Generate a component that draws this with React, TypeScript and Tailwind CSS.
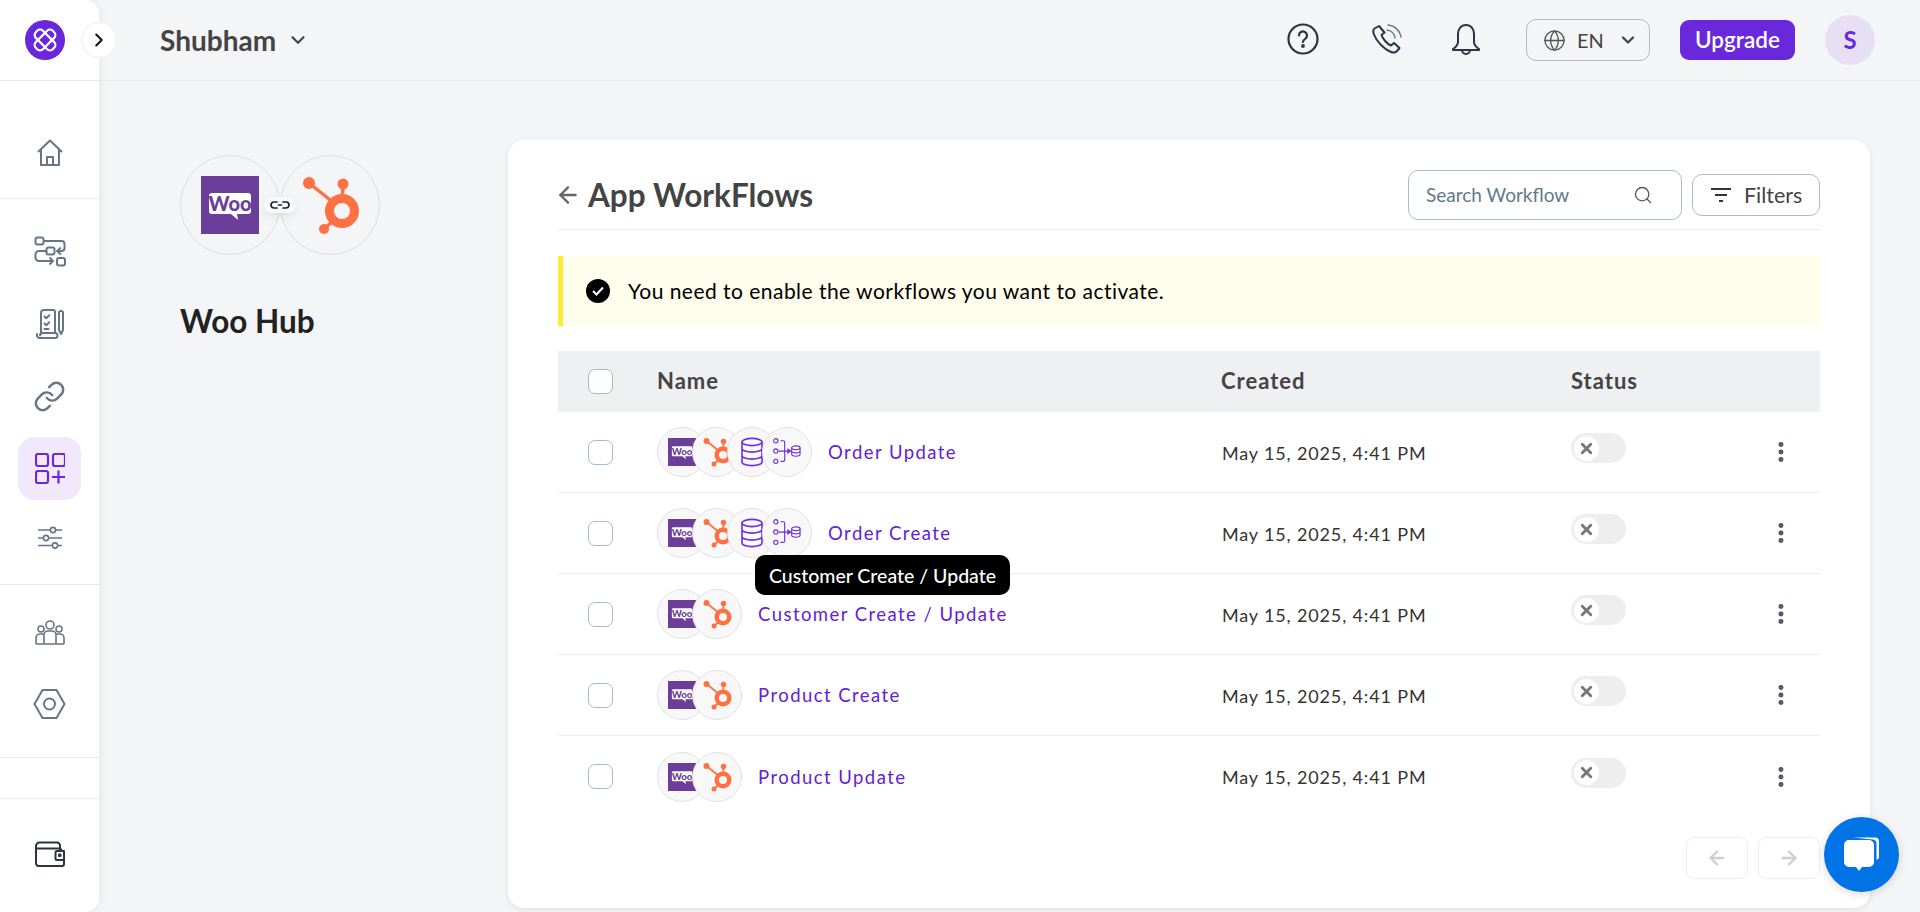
import { ArrowLeft, ArrowRight, ChevronDown, ChevronRight, EllipsisVertical, Globe, Link, Search, X } from 'lucide-react'

function WooLogo ({ size }: { size: number }): JSX.Element {
  return (
    <svg width={size} height={size} viewBox="0 0 58 58" className="shrink-0">
      <rect width="58" height="58" fill="#6b3f99" />
      <path d="M11 17h36a3 3 0 0 1 3 3v15a3 3 0 0 1-3 3H36l1 6-7-6H11a3 3 0 0 1-3-3V20a3 3 0 0 1 3-3z" fill="#fff" />
      <text x="29" y="34.500" textAnchor="middle" fontFamily="Lato, sans-serif" fontWeight="900" fontSize="20" fill="#6b3f99">Woo</text>
    </svg>
  )
}

function HubLogo ({ size }: { size: number }): JSX.Element {
  return (
    <svg width={size} height={size} viewBox="0 0 64 64" className="shrink-0" fill="#ff7043" stroke="#ff7043">
      <circle cx="44" cy="38" r="12.500" fill="none" strokeWidth="9" />
      <circle cx="11" cy="10" r="6" stroke="none" />
      <circle cx="45" cy="11" r="5.500" stroke="none" />
      <circle cx="26" cy="56" r="5" stroke="none" />
      <path d="M11 10l25 20M45 11l-.5 12M26 56l10-9" fill="none" strokeWidth="3.500" />
    </svg>
  )
}

function DbIcon (): JSX.Element {
  return (
    <svg width="22" height="30" viewBox="0 0 22 30" fill="none" stroke="#6d2ee0" strokeWidth="1.600" className="shrink-0">
      <ellipse cx="11" cy="5" rx="10" ry="3.600" />
      <path d="M1 5v20c0 2 4.500 3.600 10 3.600S21 27 21 25V5M1 11.500c0 2 4.500 3.600 10 3.600s10-1.600 10-3.600M1 18.500c0 2 4.500 3.600 10 3.600s10-1.600 10-3.600" />
    </svg>
  )
}

function FlowDbIcon (): JSX.Element {
  return (
    <svg width="28" height="28" viewBox="0 0 30 30" fill="none" stroke="#6d2ee0" strokeWidth="1.200" className="shrink-0">
      <circle cx="3" cy="3" r="2.300" />
      <circle cx="3" cy="14" r="2.300" />
      <circle cx="3" cy="25" r="2.300" />
      <path d="M8 3h3a1.500 1.500 0 0 1 1.500 1.500v19A1.500 1.500 0 0 1 11 25H8M6 14h12" />
      <path d="M16 12l3 2-3 2z" fill="#6d2ee0" />
      <ellipse cx="24.500" cy="10.500" rx="4.500" ry="2" />
      <path d="M20 10.500v7c0 1.100 2 2 4.500 2s4.500-.9 4.500-2v-7M20 14c0 1.100 2 2 4.500 2s4.500-.9 4.500-2" />
    </svg>
  )
}

function Circle ({ children }: { children: React.ReactNode }): JSX.Element {
  return (
    <div className="w-[50px] h-[50px] flex items-center justify-center rounded-full border border-[#e2e2e2] overflow-hidden bg-[#f8f8f8] shrink-0 first:ml-0 ml-[-15px]">
      {children}
    </div>
  )
}

function LogoMark (): JSX.Element {
  return (
    <div className="w-10 h-10 rounded-full bg-[#6a28dc] flex items-center justify-center">
      <svg width="26" height="26" viewBox="0 0 26 26" fill="none" stroke="#fff" strokeWidth="2.200">
        <rect x="1" y="8" width="24" height="10" rx="4" transform="rotate(45 13 13)" />
        <rect x="1" y="8" width="24" height="10" rx="4" transform="rotate(-45 13 13)" />
      </svg>
    </div>
  )
}

const navStroke = '#667685'

function HomeIcon (): JSX.Element {
  return (
    <svg width="28" height="28" viewBox="0 0 28 28" fill="none" stroke={navStroke} strokeWidth="2" strokeLinejoin="round">
      <path d="M2 13L14 1.500 26 13M5 11v15h18V11" />
      <path d="M11 26v-8h6v8" />
    </svg>
  )
}

function FlowIcon (): JSX.Element {
  return (
    <svg width="32" height="32" viewBox="0 0 32 32" fill="none" stroke={navStroke} strokeWidth="2" strokeLinejoin="round">
      <rect x="1.500" y="1.500" width="8" height="7" rx="2" />
      <path d="M9.500 5h18a3 3 0 0 1 3 3v4a3 3 0 0 1-3 3H24" />
      <path d="M27 11.500L23 15l4 3.500" />
      <rect x="12.500" y="11.500" width="8" height="7" rx="2" />
      <path d="M12.500 15H5a3.500 3.500 0 0 0-3.500 3.500v3A3.500 3.500 0 0 0 5 25h13" />
      <path d="M15.500 21.500L19 25l-3.500 3.500" />
      <rect x="23" y="22" width="8" height="7.500" rx="2" />
    </svg>
  )
}

function ChecklistIcon (): JSX.Element {
  return (
    <svg width="28" height="30" viewBox="0 0 28 30" fill="none" stroke={navStroke} strokeWidth="2" strokeLinejoin="round" strokeLinecap="round">
      <path d="M5 25V4a3 3 0 0 1 3-3h9a2 2 0 0 1 2 2v20" />
      <path d="M1 25v1.500A2.500 2.500 0 0 0 3.500 29H19a2.500 2.500 0 0 0 0-5H6.500a2.500 2.500 0 0 0-2.500 2.500" />
      <path d="M8.500 7.500l1.800 1.800 3-3M8.500 14.500l1.800 1.800 3-3M8.500 20h4" />
      <path d="M23 3a2.500 2.500 0 0 1 4 0v18l-2 4-2-4z" />
    </svg>
  )
}

function AppsIcon (): JSX.Element {
  return (
    <svg width="30" height="31" viewBox="0 0 30 31" fill="none" stroke="#6a28dc" strokeWidth="2.200">
      <rect x="1" y="1" width="12" height="12" rx="2" />
      <rect x="18" y="1" width="12" height="12" rx="2" />
      <rect x="1" y="18" width="12" height="12" rx="2" />
      <path d="M17 24h13M23.500 17.500v13" />
    </svg>
  )
}

function SlidersIcon (): JSX.Element {
  return (
    <svg width="24" height="24" viewBox="0 0 24 24" fill="none" stroke={navStroke} strokeWidth="1.600">
      <path d="M0 4h12.500M18 4h6M0 12h5.500M11 12h13M0 19.500h14.500M20 19.500h4" />
      <circle cx="15" cy="4" r="2.600" />
      <circle cx="8" cy="12" r="2.600" />
      <circle cx="17" cy="19.500" r="2.600" />
    </svg>
  )
}

function TeamIcon (): JSX.Element {
  return (
    <svg width="30" height="25" viewBox="0 0 30 25" fill="none" stroke={navStroke} strokeWidth="1.600" strokeLinejoin="round">
      <circle cx="15" cy="5" r="4" />
      <circle cx="6" cy="9" r="3" />
      <circle cx="24" cy="9" r="3" />
      <path d="M9 24v-9a4 4 0 0 1 4-4h4a4 4 0 0 1 4 4v9M1 24v-6a4 4 0 0 1 4-4h4M29 24v-6a4 4 0 0 0-4-4h-4M1 24h28" />
    </svg>
  )
}

function HexIcon (): JSX.Element {
  return (
    <svg width="33" height="30" viewBox="0 0 33 30" fill="none" stroke={navStroke} strokeWidth="2" strokeLinejoin="round">
      <path d="M9.500 1h14l8 14-8 14h-14l-8-14z" />
      <circle cx="16.500" cy="15" r="5.500" />
    </svg>
  )
}

function WalletIcon (): JSX.Element {
  return (
    <svg width="30" height="26" viewBox="0 0 30 26" fill="none" stroke="#2b3542" strokeWidth="2" strokeLinejoin="round">
      <path d="M1 5a3.500 3.500 0 0 1 3.500-3.500H22A3 3 0 0 1 25 5v3.500h2M1 5v17a3 3 0 0 0 3 3h23a2 2 0 0 0 2-2v-4M1 7.500h24" />
      <path d="M29 10v9h-7a1.500 1.500 0 0 1-1.500-1.500v-6A1.500 1.500 0 0 1 22 10z" />
      <rect x="24" y="13.500" width="1.500" height="1.500" fill="#2b3542" />
    </svg>
  )
}

function HelpIcon (): JSX.Element {
  return (
    <svg width="32" height="32" viewBox="0 0 32 32" fill="none" stroke="#2b3542" strokeWidth="2.200" strokeLinecap="round">
      <circle cx="16" cy="16" r="14.500" />
      <path d="M12 12.500a4 4 0 1 1 6.200 3.300c-1.400.9-2.200 1.600-2.200 3.200" />
      <circle cx="16" cy="23" r=".8" fill="#2b3542" />
    </svg>
  )
}

function PhoneIcon (): JSX.Element {
  return (
    <svg width="30" height="30" viewBox="0 0 30 30" fill="none" stroke="#2b3542" strokeWidth="2" strokeLinejoin="round" strokeLinecap="round">
      <path d="M7 2L2.500 4.500C1 5.500 1 8 2 10.500 4 16 11 25 19 28c2.500 1 4.500.5 6-1l2.500-3-5.500-5-3 2.500C15 20 10.500 14.500 9.500 11l3-2.500z" />
      <path d="M15 6c4 .5 7.500 3.500 8 8M16 1c6.500.5 12 5.500 13 12" strokeWidth="1.400" stroke="#667685" />
    </svg>
  )
}

function BellIcon (): JSX.Element {
  return (
    <svg width="30" height="31" viewBox="0 0 30 31" fill="none" stroke="#2b3542" strokeWidth="2" strokeLinejoin="round">
      <path d="M15 1C10 1 7 5 7 10v8c0 3-2 5-5 7v1h26v-1c-3-2-5-4-5-7v-8c0-5-3-9-8-9z" />
      <path d="M11 26a4 4 0 0 0 8 0" />
    </svg>
  )
}

function ChatIcon (): JSX.Element {
  return (
    <svg width="40" height="36" viewBox="0 0 40 36" fill="#fff">
      <path d="M7 3h20a5 5 0 0 1 5 5v17a5 5 0 0 1-5 5h-7l-3 4-3-4H7a5 5 0 0 1-5-5V8a5 5 0 0 1 5-5z" />
      <path d="M11 .5h22a4 4 0 0 1 4 4V21l-2.500 2V7a4 4 0 0 0-4-4.500z" />
    </svg>
  )
}

const rows = [
  { name: 'Order Update', full: true },
  { name: 'Order Create', full: true },
  { name: 'Customer Create / Update', full: false, tip: true },
  { name: 'Product Create', full: false },
  { name: 'Product Update', full: false }
]

function Checkbox (): JSX.Element {
  return <div className="w-[25px] h-[25px] rounded-[7px] border border-[#a9bac6] bg-white" />
}

function Row ({ name, full, tip, last }: { name: string, full: boolean, tip?: boolean, last: boolean }): JSX.Element {
  return (
    <div className={`flex items-center h-[81px] ${last ? '' : 'border-b border-[#eeeeee]'}`}>
      <div className="w-[99px] pl-[30px] shrink-0"><Checkbox /></div>
      <div className="w-[564px] shrink-0 flex items-center">
        <Circle><WooLogo size={28} /></Circle>
        <Circle><HubLogo size={32} /></Circle>
        {full && <Circle><DbIcon /></Circle>}
        {full && <Circle><FlowDbIcon /></Circle>}
        <span className="relative ml-[16px] mt-[2px] text-[18.5px] tracking-[1.450px] text-[#6321d6]">
          {name}
          {tip && (
            <span className="absolute left-[-3px] top-[-46px] h-10 w-[255px] rounded-[10px] bg-black text-white text-[19.5px] tracking-normal font-medium flex items-center justify-center">
              Customer Create / Update
            </span>
          )}
        </span>
      </div>
      <div className="w-[350px] shrink-0 pl-[1px] mt-[2px] text-[18px] tracking-[0.850px] text-[#333]">May 15, 2025, 4:41 PM</div>
      <div className="flex-1">
        <div className="w-[55px] h-[30px] mb-2 rounded-full bg-[#eeeeee] flex items-center pl-[3px]">
          <div className="w-[25px] h-[25px] rounded-full bg-white flex items-center justify-center">
            <X size={17} strokeWidth={4} color="#777" />
          </div>
        </div>
      </div>
      <div className="w-[52px] shrink-0 text-[#4b5563]"><EllipsisVertical size={26} strokeWidth={2.600} /></div>
    </div>
  )
}

export default function App (): JSX.Element {
  return (
    <div className="relative flex h-[912px] w-full overflow-hidden bg-[#f4f5f7] font-['Lato',sans-serif]">
      <aside className="w-[99px] shrink-0 flex flex-col bg-white rounded-r-[14px] shadow-[2px_0_8px_rgba(0,0,0,0.05)] z-10">
        <div className="h-[81px] shrink-0 border-b border-[#e8e8e8] pl-[25px] pt-5"><LogoMark /></div>
        <div className="h-[118px] shrink-0 border-b border-[#eeeeee] flex justify-center pt-[58px]"><HomeIcon /></div>
        <div className="h-[386px] shrink-0 border-b border-[#e8e8e8] pt-[17px] flex flex-col items-center">
          <div className="h-[72px] flex items-center"><FlowIcon /></div>
          <div className="h-[72px] flex items-center"><ChecklistIcon /></div>
          <div className="h-[72px] flex items-center"><Link size={33} strokeWidth={1.800} color={navStroke} /></div>
          <div className="h-[72px] flex items-center"><div className="w-[63px] h-[63px] rounded-2xl bg-[#f1e9fb] flex items-center justify-center"><AppsIcon /></div></div>
          <div className="h-[68px] flex items-center"><SlidersIcon /></div>
        </div>
        <div className="h-[173px] shrink-0 border-b border-[#e8e8e8] pt-[11px] flex flex-col items-center">
          <div className="h-[72px] flex items-center"><TeamIcon /></div>
          <div className="h-[72px] flex items-center"><HexIcon /></div>
        </div>
        <div className="h-[41px] shrink-0 border-b border-[#eeeeee]" />
        <div className="pt-6 flex justify-center"><div className="h-[62px] flex items-center"><WalletIcon /></div></div>
      </aside>
      <div className="absolute left-[81px] top-[22px] w-9 h-9 rounded-full bg-white border border-[#eeeeee] flex items-center justify-center z-20">
        <ChevronRight size={22} strokeWidth={2.200} color="#111" />
      </div>

      <div className="flex-1 flex flex-col min-w-0">
        <header className="h-[81px] shrink-0 flex items-center pl-[61px] pr-[45px] border-b border-[#ebecef]">
          <span className="text-[28px] font-bold text-[#444]">Shubham</span>
          <ChevronDown size={22} strokeWidth={2.400} color="#444" className="ml-[11px]" />
          <div className="ml-auto mb-[2px]"><HelpIcon /></div>
          <div className="ml-[53px] mb-[2px]"><PhoneIcon /></div>
          <div className="ml-[49px] mb-[2px]"><BellIcon /></div>
          <div className="ml-[45px] w-[124px] h-[42px] rounded-[10px] border border-[#b5b8bd] flex items-center pl-[16px] text-[#444]">
            <Globe size={23} strokeWidth={1.400} color="#555" />
            <span className="ml-[11px] text-[20px]">EN</span>
            <ChevronDown size={20} strokeWidth={2.800} className="ml-[14px]" />
          </div>
          <div className="ml-[30px] w-[115px] h-10 rounded-[9px] bg-[#6a28dc] text-white font-semibold text-[22.5px] flex items-center justify-center">Upgrade</div>
          <div className="ml-[30px] w-[50px] h-[50px] rounded-full bg-[#e7e0f5] text-[#6a28dc] font-bold text-[24px] flex items-center justify-center">S</div>
        </header>

        <main className="flex-1 flex pt-[59px] min-h-0">
          <div className="w-[409px] shrink-0 pl-[81px] pt-[15px]">
            <div className="relative flex w-[200px]">
              <div className="w-[100px] h-[100px] rounded-full border border-[#dedede] flex items-center justify-center"><WooLogo size={58} /></div>
              <div className="w-[100px] h-[100px] rounded-full border border-[#dedede] flex items-center justify-center"><HubLogo size={64} /></div>
              <div className="absolute left-[84px] top-[42px] w-[32px] h-[16px] rounded-full bg-[#f7f8f9] shadow-[0_4px_8px_rgba(0,0,0,0.08)] flex items-center justify-center">
                <svg width="20" height="8" viewBox="0 0 20 8" fill="none" stroke="#222" strokeWidth="1.700" strokeLinecap="round">
                  <path d="M7 1H4a3 3 0 0 0 0 6h3M13 1h3a3 3 0 0 1 0 6h-3M8.500 4h3" />
                </svg>
              </div>
            </div>
            <h2 className="mt-[46px] text-[31.5px] font-bold text-[#222] leading-10">Woo Hub</h2>
          </div>

          <section className="w-[1362px] h-[768px] shrink-0 rounded-2xl bg-white px-[50px] shadow-[0_2px_6px_rgba(0,0,0,0.08)]">
            <div className="h-[90px] flex items-center border-b border-[#eeeeee] pt-[21px]">
              <ArrowLeft size={26} strokeWidth={2.200} color="#666" className="-ml-[3px]" />
              <h1 className="ml-[7px] mt-[2px] text-[31.500px] font-bold text-[#444]">App WorkFlows</h1>
              <div className="ml-auto w-[274px] h-[50px] rounded-[10px] border border-[#aebac5] flex items-center justify-between pl-[17px] pr-[28px] text-[19px] text-[#5f7a8c]">
                Search Workflow
                <Search size={20} strokeWidth={1.600} color="#555" />
              </div>
              <div className="ml-[10px] w-[128px] h-[42px] rounded-[10px] border border-[#b5b8bd] flex items-center pl-[18px] text-[21.5px] text-[#444]">
                <svg width="20" height="14" viewBox="0 0 20 14" stroke="#333" strokeWidth="2"><path d="M0 1h20M4 7h12M8 13h4" /></svg>
                <span className="ml-[13px]">Filters</span>
              </div>
            </div>

            <div className="mt-[26px] h-[70px] flex items-center bg-[#fffdec] border-l-[5px] border-[#ffe93b] pl-[23px]">
              <div className="w-6 h-6 rounded-full bg-black flex items-center justify-center">
                <svg width="12" height="10" viewBox="0 0 12 10" fill="none" stroke="#fff" strokeWidth="2"><path d="M1 5l3.500 3.500L11 1.500" /></svg>
              </div>
              <span className="ml-[18px] text-[21px] tracking-[0.470px] text-black">You need to enable the workflows you want to activate.</span>
            </div>

            <div className="mt-[25px] h-[61px] flex items-center bg-[#eff0f2] text-[22px] tracking-[1px] font-bold text-[#444]">
              <div className="w-[99px] pl-[30px] shrink-0"><Checkbox /></div>
              <div className="w-[564px] shrink-0 mb-[2px]">Name</div>
              <div className="w-[350px] shrink-0 mb-[2px]">Created</div>
              <div className="mb-[2px]">Status</div>
            </div>

            {rows.map((r, i) => (
              <Row key={r.name} name={r.name} full={r.full} tip={r.tip} last={i === rows.length - 1} />
            ))}

            <div className="mt-5 flex justify-end gap-[10px]">
              <div className="w-[62px] h-[42px] rounded-lg border border-[#eeeeee] flex items-center justify-center"><ArrowLeft size={22} strokeWidth={2.500} color="#cfcfcf" /></div>
              <div className="w-[62px] h-[42px] rounded-lg border border-[#eeeeee] flex items-center justify-center"><ArrowRight size={22} strokeWidth={2.500} color="#cfcfcf" /></div>
            </div>
          </section>
        </main>
      </div>

      <div className="absolute right-[21px] bottom-[20px] w-[75px] h-[75px] rounded-full bg-[#0073e6] flex items-center justify-center shadow-[0_2px_10px_rgba(0,0,0,0.15)] z-20">
        <ChatIcon />
      </div>
    </div>
  )
}
